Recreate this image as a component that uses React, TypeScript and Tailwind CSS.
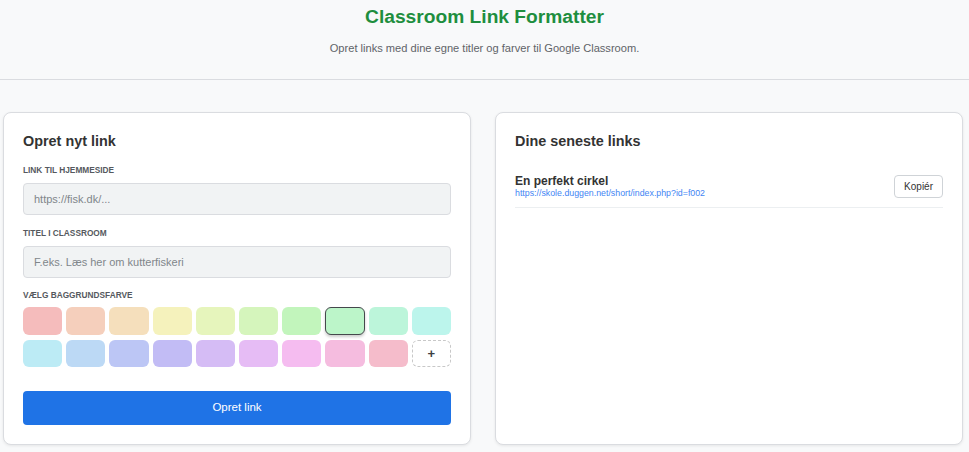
import React from "react";

const row1 = ["#f5bcbc", "#f5cfbc", "#f5dfbc", "#f5f2bc", "#e6f5bc", "#d5f5bc", "#c2f5bc", "#bcf5c9", "#bcf5da", "#bcf5ec"];
const row2 = ["#bcebf5", "#bcd9f5", "#bcc6f5", "#c2bcf5", "#d5bcf5", "#e6bcf5", "#f5bcf0", "#f5bcdf", "#f5bccb"];

export default function App() {
  return (
    <div className="min-h-[452px] bg-[#f8f9fa] text-[#333]" style={{ fontFamily: '"Liberation Sans", Arial, sans-serif' }}>
      <header className="h-[80px] border-b border-[#dadce0] flex flex-col items-center">
        <h1 className="text-[19.2px] font-bold text-[#1e8e3e] mt-[6px] leading-[22px]">Classroom Link Formatter</h1>
        <p className="text-[11.1px] text-[#5f6368] mt-[13px] leading-[14px]">Opret links med dine egne titler og farver til Google Classroom.</p>
      </header>
      <main className="grid grid-cols-2 gap-[24px] pl-[3px] pr-[6px] pt-[32px]">
        <section className="bg-white border border-[#dadce0] rounded-[8px] shadow-[0_1px_3px_rgba(0,0,0,0.08)] px-[19px] pt-[19px] pb-[19px]">
          <h2 className="text-[14.4px] font-bold text-[#333] leading-[18px]">Opret nyt link</h2>
          <label className="block mt-[15px] text-[8.3px] font-bold uppercase text-[#55595e] leading-[11px]">Link til hjemmeside</label>
          <div className="mt-[7px] h-[32px] rounded-[4px] border border-[#dadce0] bg-[#f1f3f4] flex items-center px-[10px] text-[11px] text-[#80868b]">https://fisk.dk/...</div>
          <label className="block mt-[13px] text-[8.3px] font-bold uppercase text-[#55595e] leading-[11px]">Titel i Classroom</label>
          <div className="mt-[7px] h-[32px] rounded-[4px] border border-[#dadce0] bg-[#f1f3f4] flex items-center px-[10px] text-[11px] text-[#80868b]">F.eks. Læs her om kutterfiskeri</div>
          <label className="block mt-[12px] text-[8.3px] font-bold uppercase text-[#55595e] leading-[11px]">Vælg baggrundsfarve</label>
          <div className="mt-[6px] grid grid-cols-10 gap-x-[4px] gap-y-[5px]">
            {row1.map((c, i) => (
              <div
                key={c}
                className={
                  i === 7
                    ? "h-[28px] rounded-[6px] border-[1.5px] border-[#45484c] shadow-[0_2px_3px_rgba(0,0,0,0.2)]"
                    : "h-[28px] rounded-[6px]"
                }
                style={{ backgroundColor: c }}
              />
            ))}
            {row2.map((c) => (
              <div key={c} className="h-[27px] rounded-[6px]" style={{ backgroundColor: c }} />
            ))}
            <div className="h-[27px] rounded-[6px] border border-dashed border-[#c8c8c8] bg-white flex items-center justify-center text-[13px] font-bold text-[#3c4043]">+</div>
          </div>
          <button className="mt-[24px] w-full h-[34px] rounded-[4px] bg-[#1f73e6] text-white text-[11.5px]">Opret link</button>
        </section>
        <section className="bg-white border border-[#dadce0] rounded-[8px] shadow-[0_1px_3px_rgba(0,0,0,0.08)] px-[19px] pt-[19px] pb-[20px]">
          <h2 className="text-[14.4px] font-bold text-[#333] leading-[18px]">Dine seneste links</h2>
          <div className="mt-[25px] flex items-center justify-between border-b border-[#eceff1] pb-[9px]">
            <div className="flex flex-col">
              <span className="text-[12px] font-bold text-[#333] leading-[13px]">En perfekt cirkel</span>
              <span className="text-[8.8px] text-[#4285f4] leading-[10px]">https://skole.duggen.net/short/index.php?id=f002</span>
            </div>
            <button className="h-[23px] px-[9px] rounded-[4px] border border-[#cfd3d7] bg-white text-[10px] text-[#333]">Kopiér</button>
          </div>
        </section>
      </main>
    </div>
  );
}
